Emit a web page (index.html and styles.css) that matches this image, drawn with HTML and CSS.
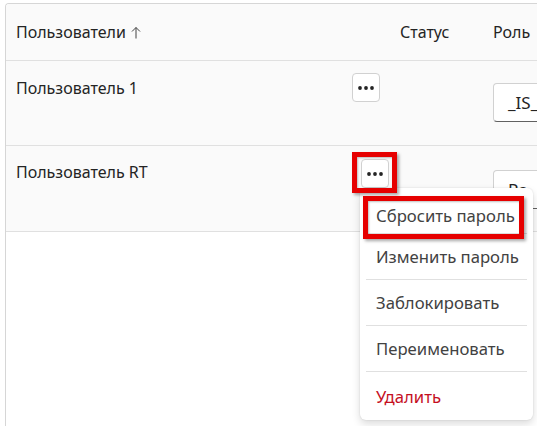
FILE: index.html
```html
<!DOCTYPE html>
<html lang="ru">
<head>
<meta charset="utf-8">
<link rel="stylesheet" href="styles.css">
</head>
<body>
<div class="frame">
  <div class="table">
    <div class="row head">
      <div class="cell name">Пользователи <svg class="sort" width="10" height="13" viewBox="0 0 10 13"><path d="M5 12.5V1.5M1 5.5L5 1.5L9 5.5" fill="none" stroke="#424242" stroke-width="1"/></svg></div>
      <div class="cell">Статус</div>
      <div class="cell">Роль</div>
    </div>
    <div class="row body r1">
      <div class="cell name top">
        <span class="uname">Пользователь 1</span>
        <button class="more"><svg width="16" height="4" viewBox="0 0 16 4"><circle cx="2" cy="2" r="1.9" fill="#242424"/><circle cx="8" cy="2" r="1.9" fill="#242424"/><circle cx="14" cy="2" r="1.9" fill="#242424"/></svg></button>
      </div>
      <div class="cell"></div>
      <div class="cell role"><div class="select">_IS_</div></div>
    </div>
    <div class="row body r2">
      <div class="cell name top shifted">
        <span class="uname">Пользователь RT</span>
        <button class="more"><svg width="16" height="4" viewBox="0 0 16 4"><circle cx="2" cy="2" r="1.9" fill="#242424"/><circle cx="8" cy="2" r="1.9" fill="#242424"/><circle cx="14" cy="2" r="1.9" fill="#242424"/></svg></button>
      </div>
      <div class="cell"></div>
      <div class="cell role"><div class="select">Ро</div></div>
    </div>
  </div>
</div>

<div class="menu">
  <div class="item first">Сбросить пароль</div>
  <div class="item">Изменить пароль</div>
  <div class="item">Заблокировать</div>
  <div class="item">Переименовать</div>
  <div class="item danger">Удалить</div>
</div>

<div class="mark mark-dots"></div>
<div class="mark mark-item"></div>
</body>
</html>
```

FILE: styles.css
```css
html, body {
  margin: 0;
  padding: 0;
  background: #ffffff;
  overflow: hidden;
  width: 537px;
  height: 426px;
}
body {
  font-family: "Noto Sans", "Open Sans", sans-serif;
  font-size: 16px;
  color: #242424;
  position: relative;
}
.frame {
  margin: 3px 0 0 5px;
  border-left: 1px solid #d6d6d6;
  border-top: 1px solid #d6d6d6;
  border-top-left-radius: 4px;
  height: 430px;
  width: 532px;
  overflow: hidden;
}
.table {
  background: #fafafa;
}
.row {
  display: grid;
  grid-template-columns: 384px 93px 1fr;
  border-bottom: 1px solid #e0e0e0;
}
.head {
  height: 56px;
  align-items: center;
}
.r1 { height: 84px; }
.r2 { height: 85px; }
.cell {
  padding-left: 10px;
  display: flex;
  align-items: center;
}
.sort {
  margin-left: 5px;
  margin-top: 1px;
}
.name.top {
  align-items: flex-start;
  justify-content: space-between;
  padding-right: 10px;
}
.uname {
  margin-top: 16px;
}
.more {
  margin-top: 12px;
  width: 28px;
  height: 29px;
  padding: 0;
  border: 1px solid #d1d1d1;
  border-radius: 4px;
  background: #ffffff;
  display: flex;
  align-items: center;
  justify-content: center;
}
.name.shifted {
  padding-right: 1px;
}
.shifted .uname { margin-top: 15px; }
.shifted .more { margin-top: 13px; }
.role {
  align-items: flex-start;
  overflow: hidden;
}
.select {
  margin-top: 22px;
  height: 39px;
  width: 200px;
  flex: none;
  box-sizing: border-box;
  border: 1px solid #d1d1d1;
  border-bottom-color: #616161;
  border-radius: 4px;
  background: #ffffff;
  padding-left: 14px;
  display: flex;
  align-items: center;
  font-size: 17px;
}
.r2 .select { margin-top: 24px; }

.menu {
  position: absolute;
  left: 360px;
  top: 188px;
  width: 173px;
  height: 232px;
  box-sizing: border-box;
  background: #ffffff;
  border-radius: 6px;
  box-shadow: 0 0 2px rgba(0,0,0,0.12), 0 4px 8px rgba(0,0,0,0.14);
  padding: 0 6px;
  font-size: 16.7px;
}
.item {
  height: 45px;
  border-bottom: 1px solid #e0e0e0;
  display: flex;
  align-items: center;
  padding-left: 10px;
  color: #424242;
  white-space: nowrap;
}
.item.first {
  height: 35px;
  padding-top: 10px;
}
.item.danger {
  border-bottom: none;
  height: 48px;
  color: #c50f1f;
}
.mark {
  position: absolute;
  border: 5px solid #e60000;
  box-sizing: border-box;
  box-shadow: 2px 2px 3px rgba(0,0,0,0.35), inset 1px 1px 2px rgba(0,0,0,0.25);
}
.mark-dots {
  left: 352px;
  top: 152px;
  width: 45px;
  height: 41px;
}
.mark-item {
  left: 363px;
  top: 196px;
  width: 161px;
  height: 43px;
}
```
